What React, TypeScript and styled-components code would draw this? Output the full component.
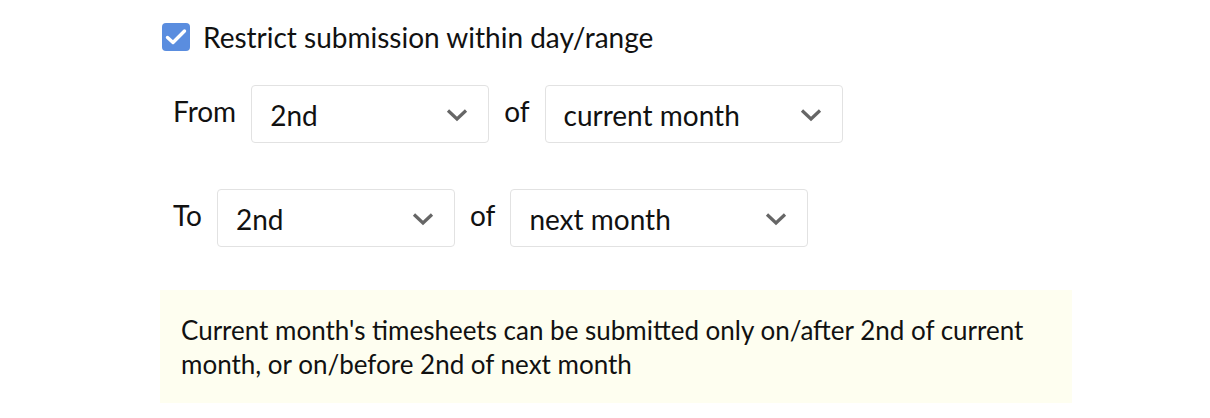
import React, { useState } from 'react';
import styled, { createGlobalStyle } from 'styled-components';

const GlobalStyle = createGlobalStyle`
  html, body {
    margin: 0;
    padding: 0;
    background: #ffffff;
  }
  body {
    font-family: Lato, 'Open Sans', sans-serif;
    color: #111111;
  }
`;

const Page = styled.div`
  width: 1210px;
  height: 418px;
  box-sizing: border-box;
  padding: 23px 0 0 160px;
  display: flex;
  flex-direction: column;
  overflow: hidden;
`;

const CheckRow = styled.label`
  display: flex;
  align-items: center;
  gap: 13px;
  margin-left: 2px;
  font-size: 28px;
  line-height: 28px;
  cursor: pointer;
`;

const CheckBox = styled.span<{ $checked: boolean }>`
  width: 28px;
  height: 28px;
  border-radius: 4px;
  flex-shrink: 0;
  display: flex;
  align-items: center;
  justify-content: center;
  background: ${(p) => (p.$checked ? '#5a8ddf' : '#ffffff')};
  border: ${(p) => (p.$checked ? 'none' : '2px solid #bbbbbb')};
  box-sizing: border-box;
`;

const RangeRow = styled.div<{ $top: number }>`
  display: flex;
  align-items: flex-start;
  gap: 15px;
  margin: ${(p) => p.$top}px 0 0 13px;
`;

const RowLabel = styled.span`
  font-size: 28px;
  line-height: 30px;
  padding-top: 11px;
`;

const SelectBox = styled.div<{ $width: number }>`
  width: ${(p) => p.$width}px;
  height: 58px;
  box-sizing: border-box;
  border: 1px solid #e2e2e2;
  border-radius: 4px;
  display: flex;
  align-items: center;
  justify-content: space-between;
  padding: 2px 20px 0 18px;
  font-size: 28px;
  background: #ffffff;
`;

const Note = styled.div`
  margin-top: 43px;
  width: 912px;
  box-sizing: border-box;
  background: #fefef0;
  padding: 23px 21px 22px;
  font-size: 26px;
  line-height: 34px;
`;

const Chevron = () => (
  <svg width="22" height="14" viewBox="0 0 22 14">
    <path d="M2 2.5 L11 11 L20 2.5" fill="none" stroke="#666666" strokeWidth="3.2" />
  </svg>
);

const Select: React.FC<{ value: string; width: number }> = ({ value, width }) => (
  <SelectBox $width={width}>
    <span>{value}</span>
    <Chevron />
  </SelectBox>
);

const App: React.FC = () => {
  const [checked, setChecked] = useState(true);
  return (
    <Page>
      <GlobalStyle />
      <CheckRow onClick={() => setChecked(!checked)}>
        <CheckBox $checked={checked}>
          {checked && (
            <svg width="22" height="18" viewBox="0 0 22 18">
              <path d="M2.5 9.5 L8 14.5 L19.5 3" fill="none" stroke="#ffffff" strokeWidth="3.4" strokeLinecap="round" strokeLinejoin="round" />
            </svg>
          )}
        </CheckBox>
        Restrict submission within day/range
      </CheckRow>
      <RangeRow $top={34}>
        <RowLabel>From</RowLabel>
        <Select value="2nd" width={238} />
        <RowLabel>of</RowLabel>
        <Select value="current month" width={298} />
      </RangeRow>
      <RangeRow $top={46}>
        <RowLabel>To</RowLabel>
        <Select value="2nd" width={238} />
        <RowLabel>of</RowLabel>
        <Select value="next month" width={298} />
      </RangeRow>
      <Note>
        Current month's timesheets can be submitted only on/after 2nd of current month, or on/before 2nd of next month
      </Note>
    </Page>
  );
};

export default App;
